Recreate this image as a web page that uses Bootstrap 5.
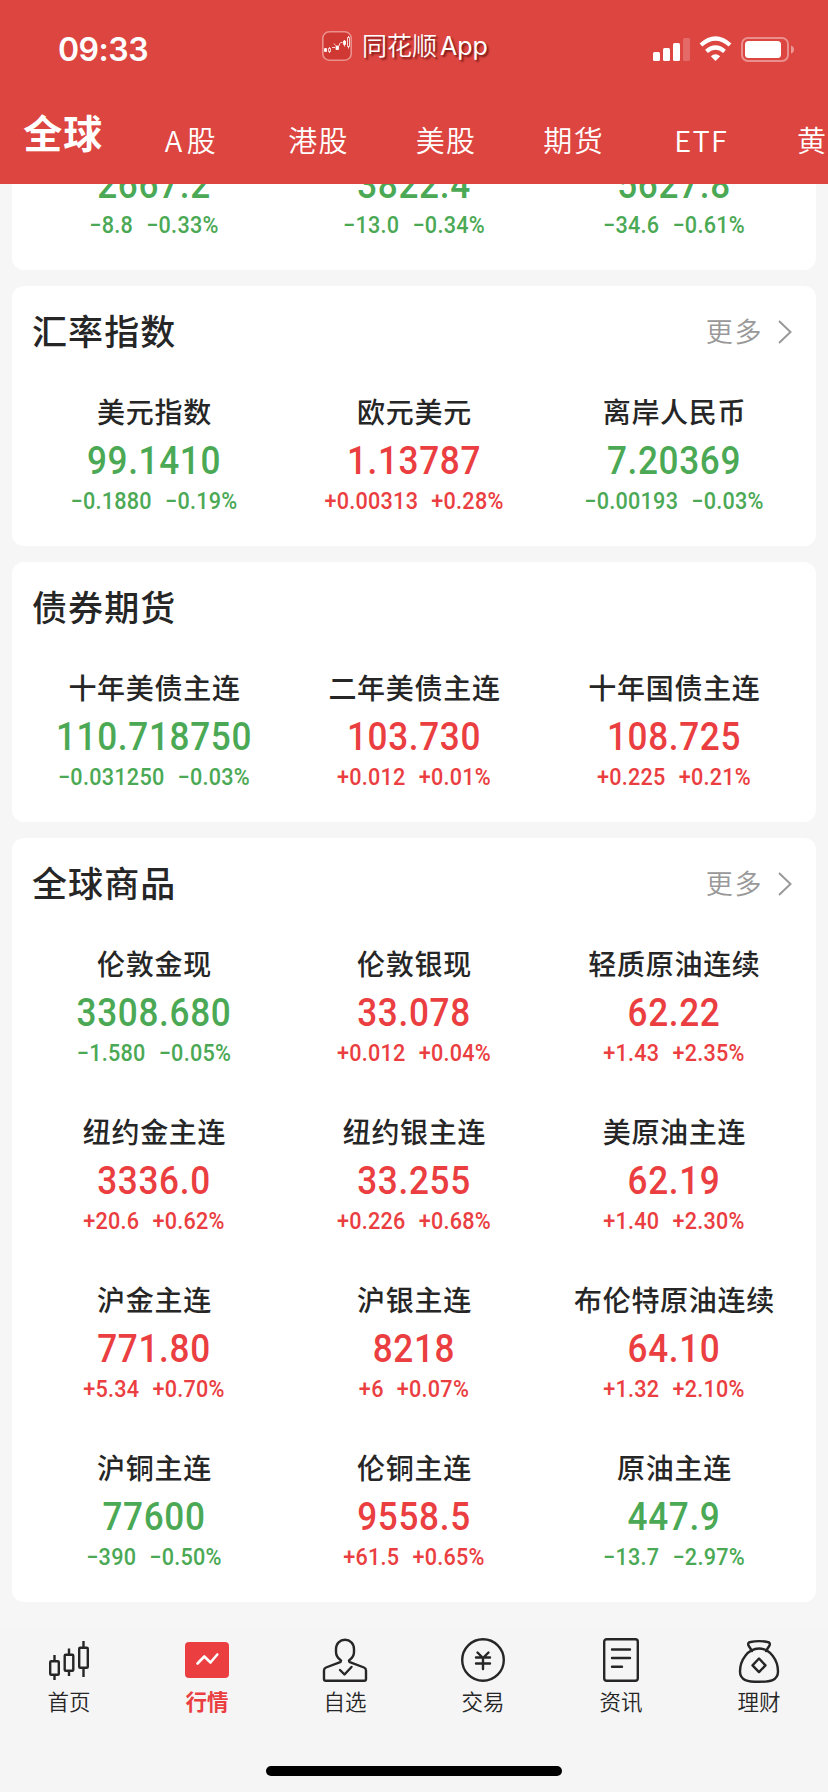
<!DOCTYPE html>
<html lang="zh-CN">
<head>
<meta charset="utf-8">
<meta name="viewport" content="width=device-width, initial-scale=1">
<title>同花顺 行情</title>
<link href="https://cdn.jsdelivr.net/npm/bootstrap@5.3.0/dist/css/bootstrap.min.css" rel="stylesheet">
<style>
  body { background: #f6f6f6; color: #262626; font-family: "Noto Sans CJK SC", sans-serif; width: 828px; height: 1792px; }
  .top-area { background: #dd4540; height: 184px; z-index: 2; }
  .status-row { height: 92px; }
  .clock { font: 600 32px/40px Inter, sans-serif; left: 58px; top: 30px; letter-spacing: -.5px; }
  .app-tag { left: 322px; top: 26px; font-size: 25px; line-height: 38px; gap: 10px; font-weight: 350; }
  .app-tag span { text-shadow: 2px 2px 2px rgba(70,0,0,.65); position: relative; top: -1px; }
  .app-tag b { font: 400 25px/38px Inter, sans-serif; margin-left: 3px; }
  .signals { left: 651px; top: 34px; }
  .tabs-row { height: 92px; }
  .tab-cell { flex: 0 0 127.6px; font-size: 29px; letter-spacing: 1.3px; line-height: 40px; padding-top: 27px; font-weight: 350; }
  .tab-cell:first-child { margin-left: -.5px; }
  .tab-cell.active { font-size: 39px; font-weight: 700; padding-top: 19px; letter-spacing: 1px; }
  .tab-cell i { font-style: normal; letter-spacing: 4.5px; }
  .tab-cell.edge { text-align: left; padding-left: 32px; }
  .panel { background: #fff; border-radius: 12px; margin: 0 12px 16px; padding: 0 12px; }
  .panel.first { height: 168px; margin-top: -82px; }
  .panel-head { height: 92px; padding: 0 11px 4px 8px; }
  .panel-head h2 { font-size: 35px; letter-spacing: 1.1px; line-height: 48px; font-weight: 500; }
  .more { color: #999; font-size: 27px; letter-spacing: 1.6px; font-weight: 350; gap: 14px; padding-top: 3px; }
  .quote { height: 168px; padding-top: 12px; text-align: center; white-space: nowrap; }
  .quote-name { font-size: 28px; letter-spacing: .7px; line-height: 42px; font-weight: 450; padding-left: 1px; }
  .price, .delta { transform: scaleX(.9); }
  .price { font: 500 39px/56px Roboto, sans-serif; letter-spacing: .75px; padding-top: 1px; }
  .delta { font: 500 24px/24px Roboto, sans-serif; letter-spacing: .3px; gap: 14.5px; }
  .up { color: #ea3e41; }
  .down { color: #4ba955; }
  .dock { background: #f5f5f5; height: 166px; margin-top: 8px; padding-top: 10px; }
  .dock-item { font-size: 21.5px; line-height: 32px; color: #262626; font-weight: 350; }
  .dock-item svg { display: block; margin: 0 auto 1px; }
  .dock-item.active { color: #ea3e41; font-weight: 700; }
  .ink { fill: none; stroke: #262626; stroke-width: 2.4; stroke-linejoin: round; stroke-linecap: round; }
  .home-bar { width: 296px; height: 10px; background: #000; border-radius: 5px; left: 266px; bottom: 16px; }
</style>
</head>
<body class="overflow-hidden d-flex flex-column position-relative">
<header class="top-area text-white position-relative flex-shrink-0">
  <div class="status-row">
    <div class="clock position-absolute">09:33</div>
    <div class="app-tag position-absolute d-flex align-items-center">
      <svg width="30" height="30" viewBox="0 0 30 30"><rect x=".8" y=".8" width="28.4" height="28.4" rx="6.5" fill="#cf3833" stroke="#eb908c" stroke-width="1.6"/><g stroke="#fff" stroke-width=".8"><path d="M2.500 17.500h2v3h-2zM14 15h2.500v3.500H14zM21.500 10h2v3.500h-2z" fill="#fff"/><path d="M6.500 17.500h2v3h-2zM25.500 6.500h2v9h-2z" fill="none"/><path d="M7.500 16v1.500M7.500 20.500v1.500M10 16.500h3M12 12.500l1.500 2M17 15l1-3M18.500 11.500h2M22.500 9v6.500M26.500 5v1.500M26.500 15.500v2" fill="none"/></g></svg>
      <span>同花顺<b>App</b></span>
    </div>
    <svg class="signals position-absolute" width="148" height="32" viewBox="0 0 148 32">
      <g fill="#fff"><rect x="2" y="18" width="7" height="9" rx="1.500"/><rect x="12" y="14" width="7" height="13" rx="1.500"/><rect x="22" y="9" width="7" height="18" rx="1.500"/><rect x="32" y="4" width="7" height="23" rx="1.500" opacity=".2"/></g>
      <g fill="none" stroke="#fff" stroke-width="4.200"><path d="M50 11Q64.500 -2 79 11"/><path d="M55.500 17.300Q64.500 9.700 73.500 17.300"/></g><path d="M59.800 22.300Q64.500 18.400 69.200 22.300L64.500 27z" fill="#fff"/>
      <rect x="91" y="4" width="46" height="23" rx="6" fill="none" stroke="#fff" stroke-opacity=".4" stroke-width="2"/><rect x="94" y="7" width="36" height="17" rx="3.500" fill="#fff"/><path d="M140 11.500q3 1 3 4t-3 4z" fill="#fff" opacity=".45"/>
    </svg>
  </div>
  <nav class="tabs-row d-flex overflow-hidden text-center text-nowrap">
    <div class="tab-cell active">全球</div><div class="tab-cell"><i>A</i>股</div><div class="tab-cell">港股</div><div class="tab-cell">美股</div><div class="tab-cell">期货</div><div class="tab-cell">ETF</div><div class="tab-cell edge">黄</div>
  </nav>
</header>
<main class="flex-shrink-0">
  <section class="panel first">
    <div class="row g-0">
      <div class="col-4 quote down"><div class="quote-name">&nbsp;</div><div class="price">2667.2</div><div class="delta d-flex justify-content-center"><span>−8.8</span><span>−0.33%</span></div></div>
      <div class="col-4 quote down"><div class="quote-name">&nbsp;</div><div class="price">3822.4</div><div class="delta d-flex justify-content-center"><span>−13.0</span><span>−0.34%</span></div></div>
      <div class="col-4 quote down"><div class="quote-name">&nbsp;</div><div class="price">5627.8</div><div class="delta d-flex justify-content-center"><span>−34.6</span><span>−0.61%</span></div></div>
    </div>
  </section>
  <section class="panel">
    <div class="panel-head d-flex align-items-center justify-content-between"><h2 class="m-0">汇率指数</h2><div class="more d-flex align-items-center">更多<svg width="16" height="26" viewBox="0 0 16 26"><path d="M2 2l11.500 11L2 24" fill="none" stroke="#999" stroke-width="2"/></svg></div></div>
    <div class="row g-0">
      <div class="col-4 quote"><div class="quote-name">美元指数</div><div class="price down">99.1410</div><div class="delta down d-flex justify-content-center"><span>−0.1880</span><span>−0.19%</span></div></div>
      <div class="col-4 quote"><div class="quote-name">欧元美元</div><div class="price up">1.13787</div><div class="delta up d-flex justify-content-center"><span>+0.00313</span><span>+0.28%</span></div></div>
      <div class="col-4 quote"><div class="quote-name">离岸人民币</div><div class="price down">7.20369</div><div class="delta down d-flex justify-content-center"><span>−0.00193</span><span>−0.03%</span></div></div>
    </div>
  </section>
  <section class="panel">
    <div class="panel-head d-flex align-items-center"><h2 class="m-0">债券期货</h2></div>
    <div class="row g-0">
      <div class="col-4 quote"><div class="quote-name">十年美债主连</div><div class="price down">110.718750</div><div class="delta down d-flex justify-content-center"><span>−0.031250</span><span>−0.03%</span></div></div>
      <div class="col-4 quote"><div class="quote-name">二年美债主连</div><div class="price up">103.730</div><div class="delta up d-flex justify-content-center"><span>+0.012</span><span>+0.01%</span></div></div>
      <div class="col-4 quote"><div class="quote-name">十年国债主连</div><div class="price up">108.725</div><div class="delta up d-flex justify-content-center"><span>+0.225</span><span>+0.21%</span></div></div>
    </div>
  </section>
  <section class="panel">
    <div class="panel-head d-flex align-items-center justify-content-between"><h2 class="m-0">全球商品</h2><div class="more d-flex align-items-center">更多<svg width="16" height="26" viewBox="0 0 16 26"><path d="M2 2l11.500 11L2 24" fill="none" stroke="#999" stroke-width="2"/></svg></div></div>
    <div class="row g-0">
      <div class="col-4 quote"><div class="quote-name">伦敦金现</div><div class="price down">3308.680</div><div class="delta down d-flex justify-content-center"><span>−1.580</span><span>−0.05%</span></div></div>
      <div class="col-4 quote"><div class="quote-name">伦敦银现</div><div class="price up">33.078</div><div class="delta up d-flex justify-content-center"><span>+0.012</span><span>+0.04%</span></div></div>
      <div class="col-4 quote"><div class="quote-name">轻质原油连续</div><div class="price up">62.22</div><div class="delta up d-flex justify-content-center"><span>+1.43</span><span>+2.35%</span></div></div>
      <div class="col-4 quote"><div class="quote-name">纽约金主连</div><div class="price up">3336.0</div><div class="delta up d-flex justify-content-center"><span>+20.6</span><span>+0.62%</span></div></div>
      <div class="col-4 quote"><div class="quote-name">纽约银主连</div><div class="price up">33.255</div><div class="delta up d-flex justify-content-center"><span>+0.226</span><span>+0.68%</span></div></div>
      <div class="col-4 quote"><div class="quote-name">美原油主连</div><div class="price up">62.19</div><div class="delta up d-flex justify-content-center"><span>+1.40</span><span>+2.30%</span></div></div>
      <div class="col-4 quote"><div class="quote-name">沪金主连</div><div class="price up">771.80</div><div class="delta up d-flex justify-content-center"><span>+5.34</span><span>+0.70%</span></div></div>
      <div class="col-4 quote"><div class="quote-name">沪银主连</div><div class="price up">8218</div><div class="delta up d-flex justify-content-center"><span>+6</span><span>+0.07%</span></div></div>
      <div class="col-4 quote"><div class="quote-name">布伦特原油连续</div><div class="price up">64.10</div><div class="delta up d-flex justify-content-center"><span>+1.32</span><span>+2.10%</span></div></div>
      <div class="col-4 quote"><div class="quote-name">沪铜主连</div><div class="price down">77600</div><div class="delta down d-flex justify-content-center"><span>−390</span><span>−0.50%</span></div></div>
      <div class="col-4 quote"><div class="quote-name">伦铜主连</div><div class="price up">9558.5</div><div class="delta up d-flex justify-content-center"><span>+61.5</span><span>+0.65%</span></div></div>
      <div class="col-4 quote"><div class="quote-name">原油主连</div><div class="price down">447.9</div><div class="delta down d-flex justify-content-center"><span>−13.7</span><span>−2.97%</span></div></div>
    </div>
  </section>
</main>
<footer class="dock flex-shrink-0">
  <div class="row g-0 text-center">
    <div class="col-2 dock-item"><svg width="48" height="48" viewBox="0 0 48 48"><g class="ink" style="stroke-linecap:butt"><rect x="5.200" y="25.200" width="8.600" height="13.600" rx="1"/><path d="M9.500 19v6M9.500 39v5"/><rect x="19.700" y="18.700" width="8.600" height="16" rx="1"/><path d="M24 12.500v6M24 35v5"/><rect x="34.200" y="11.700" width="8.600" height="20" rx="1"/><path d="M38.500 5v6.500M38.500 32v9"/></g></svg>首页</div>
    <div class="col-2 dock-item active"><svg width="48" height="48" viewBox="0 0 48 48"><rect x="2" y="6" width="44" height="36" rx="4" fill="#ea3e41"/><path d="M14.500 27.500l6.800-7 6.200 6 6.800-8" fill="none" stroke="#fff" stroke-width="2.600" stroke-linecap="round" stroke-linejoin="round"/></svg>行情</div>
    <div class="col-2 dock-item"><svg width="48" height="48" viewBox="0 0 48 48"><g class="ink"><path d="M20 24.500q0 1.300-.8 1.700L5 31.500Q3 32.300 3 34.500V43q0 1.800 1.800 1.800h38.400Q45 44.800 45 43v-8.500q0-2.200-2-3l-14.200-5.300q-.8-.4-.8-1.700 5-3.500 5-8.500v-3c0-5.500-4-9.300-9-9.300s-9 3.800-9 9.300v3q0 5 5 8.500z"/><path d="M19 34l4.500 4.500 7-7.500"/></g></svg>自选</div>
    <div class="col-2 dock-item"><svg width="48" height="48" viewBox="0 0 48 48"><g class="ink"><circle cx="24" cy="24" r="20.800"/><path d="M18.500 16.500l5.500 5.500 5.500-5.500M17 21.500h14M17 27.500h14M24 22v11"/></g></svg>交易</div>
    <div class="col-2 dock-item"><svg width="48" height="48" viewBox="0 0 48 48"><g class="ink"><rect x="7.200" y="3.200" width="33.600" height="41.600" rx="2.500"/><path d="M15 13.500h18M15 22h18M15 30.800h10"/></g></svg>资讯</div>
    <div class="col-2 dock-item"><svg width="48" height="48" viewBox="0 0 48 48"><g class="ink"><path d="M17 15l-3.500-5.500q-1.200-3 2-3.500Q24 4.200 32.500 6q3.200.5 2 3.500L31 15"/><path d="M24 12.500C13 12.500 5 24 5 35.500 5 44.500 13 45.800 24 45.800S43 44.500 43 35.500C43 24 35 12.500 24 12.500z"/><path d="M24 22.500l6.500 6.800-6.500 6.800-6.500-6.800z"/></g></svg>理财</div>
  </div>
</footer>
<div class="home-bar position-absolute"></div>
<script src="https://cdn.jsdelivr.net/npm/bootstrap@5.3.0/dist/js/bootstrap.bundle.min.js"></script>
</body>
</html>
